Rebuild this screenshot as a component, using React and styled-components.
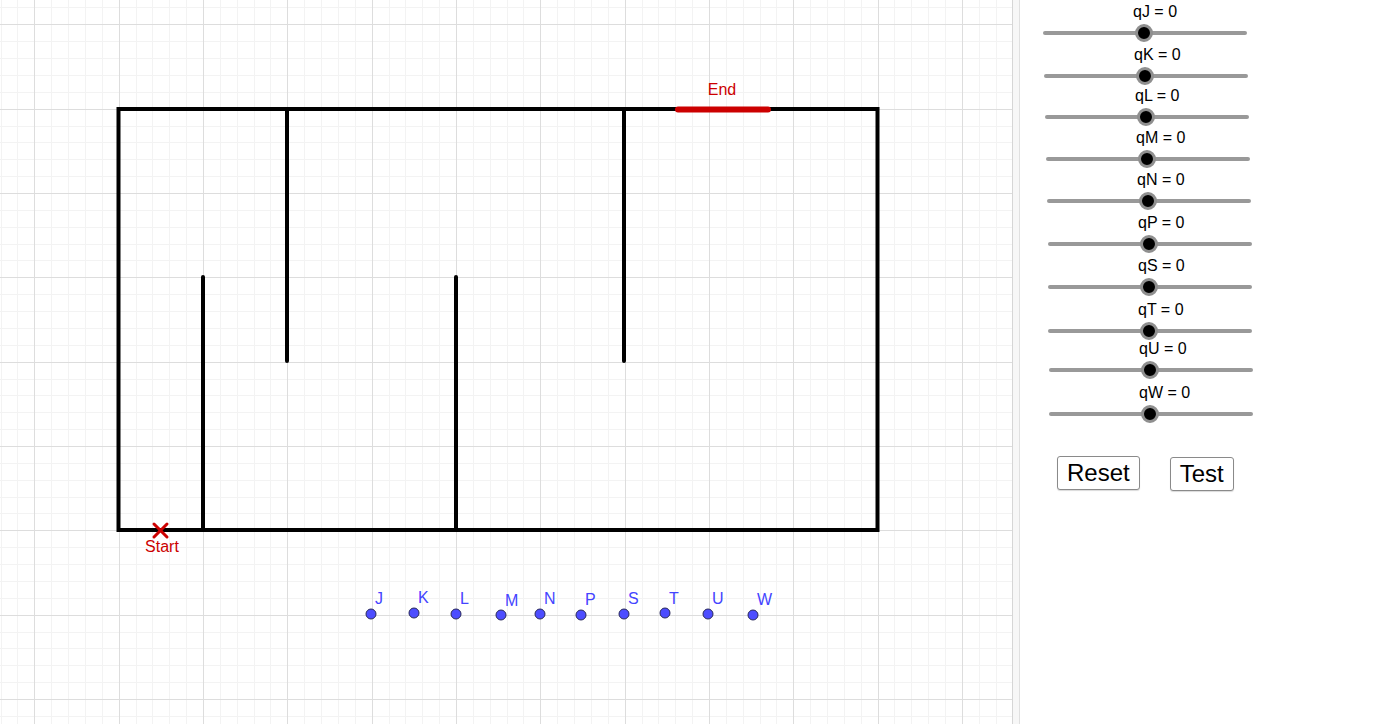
import styled, { createGlobalStyle } from 'styled-components';

const GlobalStyle = createGlobalStyle`
  html, body {
    margin: 0;
    padding: 0;
    background: #ffffff;
    font-family: "Liberation Sans", Arial, sans-serif;
    overflow: hidden;
  }
`;

const GRID_W = 1012;
const GRID_H = 724;
const MAJOR = 84.33;
const MINOR = MAJOR / 5;
const ORIGIN = 34.33;

const sliders = [
  { name: 'qJ', top: 3, left: 23 },
  { name: 'qK', top: 5, left: 24 },
  { name: 'qL', top: 3, left: 25 },
  { name: 'qM', top: 4, left: 26 },
  { name: 'qN', top: 4, left: 27 },
  { name: 'qP', top: 5, left: 28 },
  { name: 'qS', top: 5, left: 28 },
  { name: 'qT', top: 6, left: 28 },
  { name: 'qU', top: 1, left: 29 },
  { name: 'qW', top: 6, left: 29 },
];

const points = [
  { id: 'J', x: 371, y: 614, dy: 0 },
  { id: 'K', x: 414, y: 613, dy: 0 },
  { id: 'L', x: 456, y: 614, dy: 0 },
  { id: 'M', x: 501, y: 615, dy: 1 },
  { id: 'N', x: 540, y: 614, dy: 0 },
  { id: 'P', x: 581, y: 615, dy: 0 },
  { id: 'S', x: 624, y: 614, dy: 0 },
  { id: 'T', x: 665, y: 613, dy: 1 },
  { id: 'U', x: 708, y: 614, dy: 0 },
  { id: 'W', x: 753, y: 615, dy: 0 },
];

const walls = [
  [203, 277, 203, 530],
  [287, 109, 287, 361],
  [456, 277, 456, 530],
  [624, 109, 624, 361],
];

function gridLines(step, from, max) {
  const out = [];
  let v = from % step;
  while (v <= max) {
    out.push(Math.round(v) + 0.5);
    v += step;
  }
  return out;
}

function Graphics() {
  const minorX = gridLines(MINOR, ORIGIN, GRID_W);
  const minorY = gridLines(MINOR, 24.33, GRID_H);
  const majorX = gridLines(MAJOR, ORIGIN, GRID_W);
  const majorY = gridLines(MAJOR, 24.33, GRID_H);

  return (
    <Canvas width={GRID_W} height={GRID_H} viewBox={`0 0 ${GRID_W} ${GRID_H}`}>
      <g stroke="#f3f3f3" strokeWidth="1">
        {minorX.map((x) => <line key={`mx${x}`} x1={x} y1="0" x2={x} y2={GRID_H} />)}
        {minorY.map((y) => <line key={`my${y}`} x1="0" y1={y} x2={GRID_W} y2={y} />)}
      </g>
      <g stroke="#dddddd" strokeWidth="1">
        {majorX.map((x) => <line key={`Mx${x}`} x1={x} y1="0" x2={x} y2={GRID_H} />)}
        {majorY.map((y) => <line key={`My${y}`} x1="0" y1={y} x2={GRID_W} y2={y} />)}
      </g>

      <g stroke="#000" strokeWidth="4" fill="none" strokeLinecap="round">
        <rect x="118.5" y="109" width="759" height="421" strokeLinejoin="miter" />
        {walls.map(([x1, y1, x2, y2]) => (
          <line key={`${x1}-${y1}`} x1={x1} y1={y1} x2={x2} y2={y2} />
        ))}
      </g>

      <line x1="678" y1="109.5" x2="768" y2="109.5" stroke="#cc0000" strokeWidth="6" strokeLinecap="round" />
      <Label x="722" y="95" fill="#cc0000" textAnchor="middle">End</Label>

      <g stroke="#cc0000" strokeWidth="3" strokeLinecap="round">
        <line x1="154" y1="524" x2="167" y2="537" />
        <line x1="167" y1="524" x2="154" y2="537" />
      </g>
      <Label x="162" y="552" fill="#cc0000" textAnchor="middle">Start</Label>

      {points.map((p) => (
        <g key={p.id}>
          <circle cx={p.x} cy={p.y} r="5" fill="#4d4dff" stroke="#2a2a5a" strokeWidth="1" />
          <Label x={p.x + 4} y={p.y - 10 + p.dy} fill="#4444ff">{p.id}</Label>
        </g>
      ))}
    </Canvas>
  );
}

function Slider({ name, top, left }) {
  return (
    <SliderBox $top={top} $left={left}>
      <SliderLabel>{name} = 0</SliderLabel>
      <TrackArea>
        <Track />
        <Thumb />
      </TrackArea>
    </SliderBox>
  );
}

export default function App() {
  return (
    <>
      <GlobalStyle />
      <Page>
        <GraphicsView>
          <Graphics />
        </GraphicsView>
        <Divider />
        <SidePanel>
          {sliders.map((s) => (
            <Slider key={s.name} {...s} />
          ))}
          <ButtonRow>
            <Button>Reset</Button>
            <Button $nudge={1}>Test</Button>
          </ButtonRow>
        </SidePanel>
      </Page>
    </>
  );
}

const Page = styled.div`
  display: flex;
  width: 100vw;
  height: 100vh;
  overflow: hidden;
`;

const GraphicsView = styled.div`
  flex: 0 0 ${GRID_W}px;
  height: 100%;
  overflow: hidden;
  background: #fff;
`;

const Canvas = styled.svg`
  display: block;
`;

const Label = styled.text`
  font-family: "Liberation Sans", Arial, sans-serif;
  font-size: 16px;
`;

const Divider = styled.div`
  flex: 0 0 6px;
  background: #f7f7f7;
  border-left: 1px solid #d6d6d6;
  border-right: 1px solid #e0e0e0;
`;

const SidePanel = styled.div`
  flex: 1;
  display: flex;
  flex-direction: column;
  background: #fff;
`;

const SliderBox = styled.div`
  width: 204px;
  margin-top: ${(p) => p.$top}px;
  margin-left: ${(p) => p.$left}px;
  display: flex;
  flex-direction: column;
`;

const SliderLabel = styled.div`
  height: 18px;
  line-height: 18px;
  font-size: 16px;
  color: #000;
  padding-left: 90px;
  white-space: nowrap;
`;

const TrackArea = styled.div`
  position: relative;
  height: 16px;
  margin-top: 4px;
  display: flex;
  align-items: center;
`;

const Track = styled.div`
  width: 100%;
  height: 4px;
  border-radius: 2px;
  background: #999999;
`;

const Thumb = styled.div`
  position: absolute;
  left: 92px;
  top: -1px;
  width: 12px;
  height: 12px;
  border-radius: 50%;
  background: #000;
  border: 3px solid #8f8f8f;
`;

const ButtonRow = styled.div`
  display: flex;
  gap: 30px;
  margin-top: 34px;
  margin-left: 37px;
  align-items: flex-start;
`;

const Button = styled.button`
  height: 34px;
  padding: 0 9px;
  margin-top: ${(p) => p.$nudge || 0}px;
  font-family: "Liberation Sans", Arial, sans-serif;
  font-size: 24px;
  line-height: 32px;
  color: #000;
  background: #fff;
  border: 1px solid #8a8a8a;
  border-radius: 3px;
  box-shadow: 0 1px 1px rgba(0, 0, 0, 0.15);
  cursor: pointer;
`;
